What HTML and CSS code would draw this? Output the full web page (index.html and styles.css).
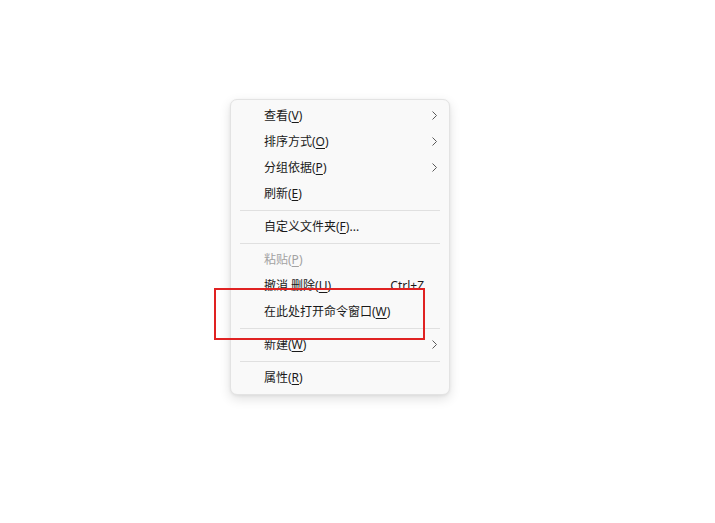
FILE: index.html
```html
<!DOCTYPE html>
<html lang="zh-CN">
<head>
  <meta charset="UTF-8" />
  <meta name="viewport" content="width=device-width, initial-scale=1" />
  <title>右键菜单</title>
  <link rel="stylesheet" href="styles.css">
</head>
<body>
  <div class="stage">
    <div class="menu">
      <div class="item">
        <span class="label">查看(<u>V</u>)</span>
        <svg class="arrow" width="5" height="9" viewBox="0 0 5 9"><polyline points="0.5,0.5 4.5,4.5 0.5,8.5" /></svg>
      </div>
      <div class="item">
        <span class="label">排序方式(<u>O</u>)</span>
        <svg class="arrow" width="5" height="9" viewBox="0 0 5 9"><polyline points="0.5,0.5 4.5,4.5 0.5,8.5" /></svg>
      </div>
      <div class="item">
        <span class="label">分组依据(<u>P</u>)</span>
        <svg class="arrow" width="5" height="9" viewBox="0 0 5 9"><polyline points="0.5,0.5 4.5,4.5 0.5,8.5" /></svg>
      </div>
      <div class="item">
        <span class="label">刷新(<u>E</u>)</span>
      </div>
      <div class="sep"></div>
      <div class="item">
        <span class="label">自定义文件夹(<u>F</u>)...</span>
      </div>
      <div class="sep"></div>
      <div class="item disabled">
        <span class="label">粘贴(<u>P</u>)</span>
      </div>
      <div class="item">
        <span class="label">撤消 删除(<u>U</u>)</span>
        <span class="shortcut">Ctrl+Z</span>
      </div>
      <div class="item">
        <span class="label">在此处打开命令窗口(<u>W</u>)</span>
      </div>
      <div class="sep"></div>
      <div class="item">
        <span class="label">新建(<u>W</u>)</span>
        <svg class="arrow" width="5" height="9" viewBox="0 0 5 9"><polyline points="0.5,0.5 4.5,4.5 0.5,8.5" /></svg>
      </div>
      <div class="sep"></div>
      <div class="item">
        <span class="label">属性(<u>R</u>)</span>
      </div>
    </div>
    <!-- 红色标注框 -->
    <div class="highlight"></div>
  </div>
</body>
</html>
```

FILE: styles.css
```css
* {
  box-sizing: border-box;
}
body {
  margin: 0;
  padding: 0;
  background: #fff;
  font-family: "Noto Sans", "Noto Sans CJK SC", sans-serif;
}
.stage {
  position: relative;
  width: 715px;
  height: 523px;
  padding: 99px 0 0 230px;
}
.menu {
  width: 220px;
  background: #f9f9f9;
  border: 1px solid #e3e3e3;
  border-radius: 7px;
  padding: 2px 0 4px;
  box-shadow: 0 4px 12px rgba(0,0,0,0.12), 0 1px 3px rgba(0,0,0,0.06);
}
.item {
  display: flex;
  align-items: center;
  height: 26px;
  padding: 0 12px 0 33px;
  font-size: 12px;
  color: #1a1a1a;
}
.item u {
  text-underline-offset: 2px;
}
.label {
  flex: 1;
  white-space: nowrap;
}
.disabled {
  color: #a2a2a2;
}
.shortcut {
  margin-right: 13px;
  color: #1a1a1a;
}
.arrow {
  display: block;
}
.arrow polyline {
  fill: none;
  stroke: #5a5a5a;
  stroke-width: 1;
}
.sep {
  height: 1px;
  margin: 4px 9px 2px;
  background: #e0e0e0;
}
.highlight {
  position: absolute;
  left: 214px;
  top: 288px;
  width: 211px;
  height: 52px;
  border: 2px solid #e02222;
}
```
